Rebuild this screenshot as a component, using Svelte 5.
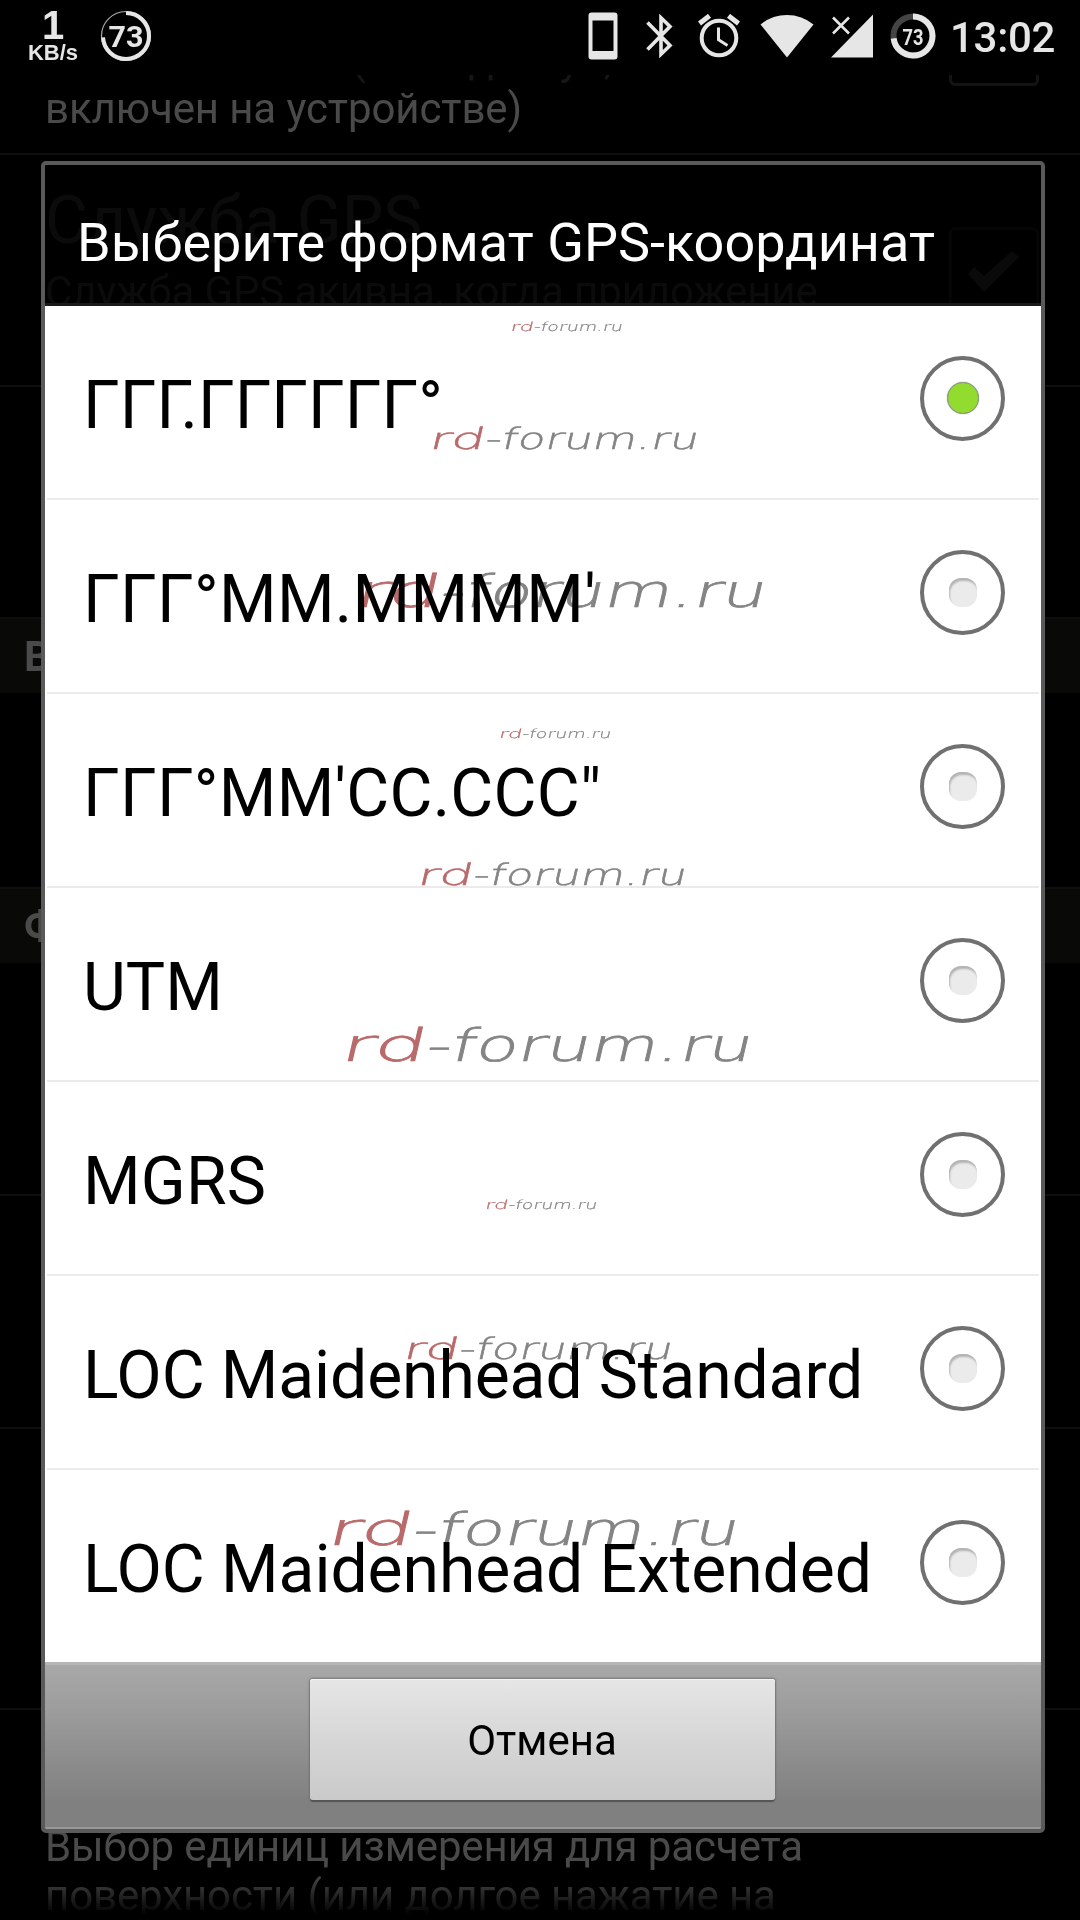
<script>
  // track = letter spacing in px
  const formats = [
    { name: "ГГГ.ГГГГГГ°", track: 0 },
    { name: "ГГГ°ММ.ММММ'", track: 0.3 },
    { name: "ГГГ°ММ'СС.ССС\"", track: 0.25 },
    { name: "UTM", track: 0 },
    { name: "MGRS", track: 0.2 },
    { name: "LOC Maidenhead Standard", track: -0.1 },
    { name: "LOC Maidenhead Extended", track: -0.05 }
  ];

  // x = left edge, y = baseline, w = drawn width
  const marks = [
    { x: 510, y: 331, w: 112, size: 12.5 },
    { x: 428, y: 449, w: 269, size: 29.5 },
    { x: 353, y: 606.5, w: 411, size: 45 },
    { x: 498.5, y: 737.5, w: 112, size: 12.5 },
    { x: 416, y: 884.5, w: 269, size: 29.5 },
    { x: 339, y: 1060.5, w: 411, size: 45 },
    { x: 484.5, y: 1209, w: 112, size: 12.5 },
    { x: 402, y: 1358.5, w: 269, size: 29.5 },
    { x: 325.5, y: 1544.5, w: 411, size: 45 }
  ];

  // share of the mark taken by the red "rd"
  const RED = 0.207;

  let selected = $state(0);
</script>

<div class="screen">
  <header class="status">
    <div class="speed">
      <span class="rate">1</span>
      <span class="unit">KB/s</span>
    </div>
    <svg class="battery-big" width="52" height="52" viewBox="0 0 52 52">
      <circle cx="26" cy="26" r="24.5" fill="none" stroke="#aaa" stroke-width="1.2" />
      <circle cx="26" cy="26" r="23" fill="none" stroke="#e6e6e6" stroke-width="4" pathLength="100" stroke-dasharray="74 100" transform="rotate(-90 26 26)" />
      <text x="26" y="36.5" text-anchor="middle" textLength="35" lengthAdjust="spacingAndGlyphs" font-size="29.500" font-weight="700">73</text>
    </svg>
    <div class="icons">
      <svg width="30" height="48" viewBox="0 0 30 48">
        <path fill-rule="evenodd" d="M3.5 0.5h23q3 0 3 3v41q0 3-3 3h-23q-3 0-3-3v-41q0-3 3-3zM4.5 8.500v30.500h21v-30.500z" />
      </svg>
      <svg width="28" height="44" viewBox="0 0 28 44">
        <path fill="none" stroke="#e6e6e6" stroke-width="3.600" d="M1.500 8.500 24 31.500 15 40.200V3.800L24 12.500 1.500 35.500" />
      </svg>
      <svg width="42" height="44" viewBox="0 0 42 44">
        <g fill="none" stroke="#e6e6e6">
          <circle cx="21" cy="24" r="17.300" stroke-width="4" />
          <path stroke-width="3" d="M20.500 13.500v12.200l9 5.800" />
          <path stroke-width="5" d="M1.500 9.500 11.500 1.800M40.500 9.500 30.500 1.800" />
        </g>
      </svg>
      <svg width="54" height="44" viewBox="0 0 54 44">
        <path d="M0.500 10.500Q12 1 27 1T53.500 10.500L27 43.500z" />
      </svg>
      <svg width="42" height="44" viewBox="0 0 42 44">
        <path d="M42 0.500V43.500H0z" />
        <path fill="none" stroke="#e6e6e6" stroke-width="2.600" d="M2 3.500 18 19.500M18 3.500 2 19.500" />
      </svg>
      <svg width="46" height="46" viewBox="0 0 46 46">
        <circle cx="23" cy="23" r="19.500" fill="none" stroke="#444" stroke-width="6" />
        <circle cx="23" cy="23" r="19.500" fill="none" stroke="#e6e6e6" stroke-width="6" pathLength="100" stroke-dasharray="73 100" transform="rotate(-90 23 23)" />
        <text x="23" y="31.500" text-anchor="middle" textLength="21" lengthAdjust="spacingAndGlyphs" font-size="22" font-weight="700">73</text>
      </svg>
    </div>
    <span class="clock">13:02</span>
  </header>

  <main class="prefs">
    <section class="pref first">
      <p class="faint">Искать по сети (если доступ,</p>
      <p>включен на устройстве)</p>
      <i class="box cut"></i>
    </section>
    <section class="pref gps">
      <div>
        <h2>Служба GPS</h2>
        <p>Служба GPS акивна, когда приложение</p>
      </div>
      <i class="box">
        <svg width="56" height="44" viewBox="0 0 56 44"><path d="M2 24 8 17 18 26 46 1 53 7 18 42z" /></svg>
      </i>
    </section>
    <section class="pref tall"></section>
    <h3>В</h3>
    <section class="pref short"></section>
    <h3>Ф</h3>
    <section class="pref mid"></section>
    <section class="pref mid"></section>
    <section class="pref big"></section>
    <section class="pref last">
      <p>Выбор единиц измерения для расчета</p>
      <p>поверхности (или долгое нажатие на</p>
    </section>
  </main>
  <div class="fade"></div>

  <div class="dialog">
    <h1>Выберите формат GPS-координат</h1>
    <ul>
      {#each formats as format, i}
        <li>
          <button class="row" onclick={() => (selected = i)}>
            <span class="label" style="letter-spacing: {format.track}px">{format.name}</span>
            <span class="radio" class:on={selected === i}><i></i></span>
          </button>
        </li>
      {/each}
    </ul>
    <footer>
      <button class="cancel">Отмена</button>
    </footer>
  </div>

  <svg class="marks" width="1080" height="1920" viewBox="0 0 1080 1920">
    {#each marks as m}
      <g transform="translate({m.x} {m.y}) skewX(-13)" font-size={m.size} stroke-width={m.size / 65}>
        <text class="red" textLength={m.w * RED} lengthAdjust="spacingAndGlyphs">rd</text>
        <text x={m.w * RED} textLength={m.w * (1 - RED)} lengthAdjust="spacingAndGlyphs">-forum.ru</text>
      </g>
    {/each}
  </svg>
</div>

<style>
  :global(body) {
    margin: 0;
    background: #000;
  }

  .screen {
    position: relative;
    width: 1080px;
    height: 1920px;
    overflow: hidden;
    background: #000;
    font-family: Roboto, sans-serif;
  }

  h1, h2, h3, p, ul {
    margin: 0;
    padding: 0;
    font-weight: 400;
  }

  button {
    border: 0;
    font-family: inherit;
    color: #000;
  }

  .status {
    height: 75px;
    box-sizing: border-box;
    padding: 0 24px 3px 28px;
    display: flex;
    align-items: center;
    color: #e6e6e6;
  }

  .status svg {
    fill: #e6e6e6;
    flex: none;
  }

  .speed {
    width: 50px;
    display: flex;
    flex-direction: column;
    align-items: center;
    font-family: "Liberation Sans", sans-serif;
    font-weight: 700;
  }

  .rate {
    font-size: 40px;
    line-height: 33px;
  }

  .unit {
    font-size: 22px;
    line-height: 21px;
  }

  .battery-big {
    margin-left: 22px;
  }

  .icons {
    margin-left: auto;
    display: flex;
    align-items: center;
  }

  .icons svg:nth-child(2) { margin-left: 28px; }
  .icons svg:nth-child(3) { margin-left: 24px; }
  .icons svg:nth-child(4) { margin-left: 20px; }
  .icons svg:nth-child(5) { margin-left: 17px; }
  .icons svg:nth-child(6) { margin-left: 17px; }

  .clock {
    width: 106px;
    margin-left: 14px;
    padding-top: 2px;
    font-size: 42px;
    font-weight: 500;
    letter-spacing: -0.3px;
    white-space: nowrap;
  }

  .prefs {
    height: 1845px;
    overflow: hidden;
    color: #4a4a4a;
  }

  .prefs p {
    font-size: 42px;
    line-height: 49px;
    letter-spacing: -0.1px;
    white-space: nowrap;
  }

  .pref {
    box-sizing: border-box;
    padding: 0 41px 0 45px;
    border-bottom: 2px solid #0e0e0e;
  }

  .first {
    height: 80px;
    position: relative;
    display: flex;
    flex-direction: column;
  }

  .first .faint {
    margin-top: -40px;
    color: #161616;
  }

  .gps {
    height: 232px;
    padding-top: 27px;
    display: flex;
    align-items: flex-start;
    justify-content: space-between;
  }

  .gps h2 {
    margin-bottom: 7px;
    font-size: 66px;
    line-height: 78px;
  }

  .box {
    width: 84px;
    height: 84px;
    border: 3px solid #222;
    border-radius: 6px;
    display: flex;
    align-items: center;
    justify-content: center;
  }

  .gps .box {
    margin-top: 45px;
  }

  .box svg {
    fill: #444;
  }

  .cut {
    position: absolute;
    right: 41px;
    top: -79px;
    border-color: #141414;
  }

  .tall { height: 232px; }
  .short { height: 196px; }
  .mid { height: 233px; }
  .big { height: 281px; }

  .prefs h3 {
    height: 74px;
    box-sizing: border-box;
    padding: 1px 0 0 24px;
    background: #090907;
    font-size: 42px;
    line-height: 74px;
    font-weight: 700;
  }

  .last {
    padding-top: 112px;
    border: 0;
  }

  .fade {
    position: absolute;
    left: 0;
    bottom: 0;
    width: 100%;
    height: 46px;
    background: linear-gradient(transparent, #000 90%);
  }

  .dialog {
    position: absolute;
    left: 41px;
    top: 161px;
    width: 1004px;
    height: 1672px;
    box-sizing: border-box;
    border: 4px solid #5a5a5a;
    border-radius: 5px;
    overflow: hidden;
    display: flex;
    flex-direction: column;
    background: rgba(0, 0, 0, 0.85);
  }

  h1 {
    height: 141px;
    box-sizing: border-box;
    padding: 46px 0 0 32px;
    border-bottom: 3px solid #1a1a1a;
    font-size: 54px;
    line-height: 64px;
    white-space: nowrap;
    color: #fff;
  }

  ul {
    list-style: none;
    background: #fff;
  }

  li {
    height: 192px;
    padding: 0 2px;
  }

  li + li {
    padding-top: 2px;
    background: linear-gradient(#ebebeb, #ebebeb) 2px 0 / 992px 2px no-repeat;
  }

  .row {
    width: 100%;
    height: 192px;
    padding: 0 34px 0 36px;
    display: flex;
    align-items: center;
    justify-content: space-between;
    background: none;
    font-size: 66px;
  }

  .label {
    padding-top: 7px;
    white-space: nowrap;
  }

  .radio {
    width: 77px;
    height: 77px;
    margin-bottom: 8px;
    border: 4px solid #707070;
    border-radius: 50%;
    flex: none;
    display: flex;
    align-items: center;
    justify-content: center;
  }

  .radio i {
    width: 28px;
    height: 29px;
    border-radius: 12px;
    background: #ebebeb;
    box-shadow: inset 1px 3px 2px #b4b4b4;
  }

  .radio.on i {
    width: 30px;
    height: 30px;
    border: 1px solid #8f9a80;
    border-radius: 50%;
    background: #92dc30;
    box-shadow: 0 0 1px #777;
  }

  footer {
    flex: 1;
    display: flex;
    justify-content: center;
    align-items: flex-start;
    padding-top: 14px;
    border-top: 3px solid #b5b5b5;
    border-bottom: 2px solid #999;
    background: linear-gradient(#a8a8a8, #a0a0a0 20%, #8c8c8c 60%, #808080 85%);
  }

  .cancel {
    width: 465px;
    height: 121px;
    margin-right: 2px;
    padding-top: 3px;
    border-radius: 3px;
    background: linear-gradient(#e6e6e6, #d8d8d8 45%, #cacaca);
    box-shadow: inset 0 1px #f4f4f4, 0 2px 1px #555, 0 0 2px 1px #777;
    font-size: 42px;
  }

  .marks {
    position: absolute;
    left: 0;
    top: 0;
    pointer-events: none;
    mix-blend-mode: multiply;
    font-family: "DejaVu Sans", sans-serif;
    font-weight: 200;
    fill: #848484;
    stroke: #848484;
  }

  .red {
    fill: #b96a6a;
    stroke: #b96a6a;
  }
</style>
